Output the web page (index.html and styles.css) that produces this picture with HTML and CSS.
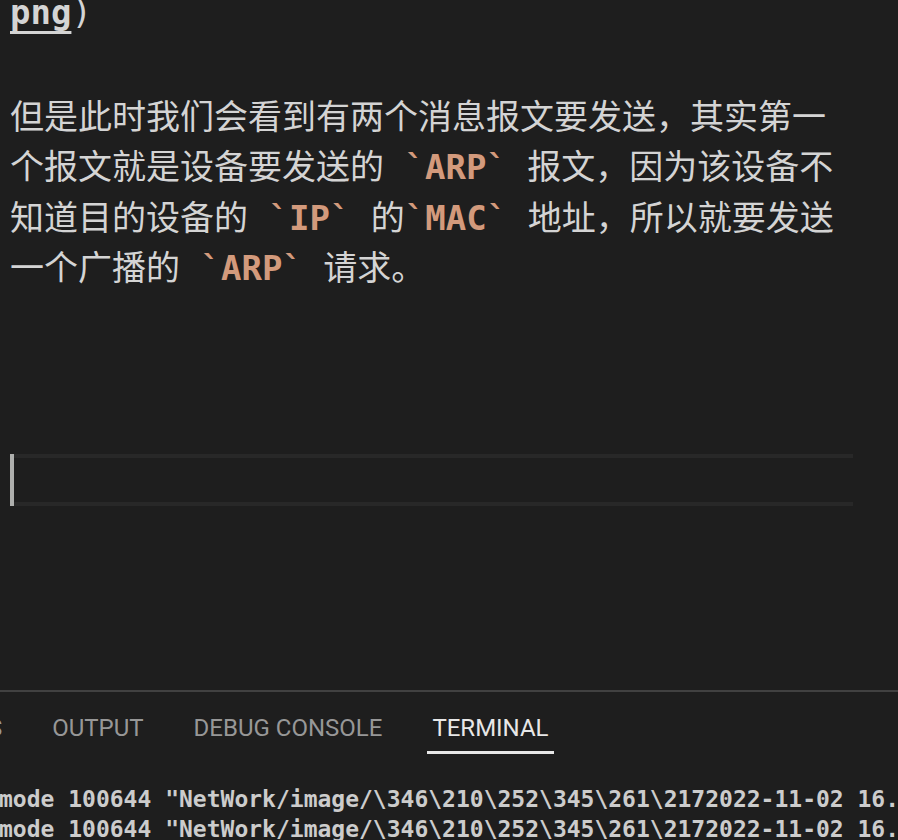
FILE: index.html
```html
<!DOCTYPE html>
<html lang="zh-CN">
<head>
<meta charset="utf-8">
<title>Editor</title>
<link rel="stylesheet" href="styles.css">
</head>
<body>
<div class="window">
  <div class="editor">
    <div class="line first"><span class="link">png</span>)</div>
    <div class="para">
      <div class="line">但是此时我们会看到有两个消息报文要发送，其实第一</div>
      <div class="line">个报文就是设备要发送的 <span class="code">`ARP`</span> 报文，因为该设备不</div>
      <div class="line">知道目的设备的 <span class="code">`IP`</span> 的<span class="code">`MAC`</span> 地址，所以就要发送</div>
      <div class="line">一个广播的 <span class="code">`ARP`</span> 请求。</div>
    </div>
    <div class="current-row">
      <div class="cursor"></div>
      <div class="current-line"></div>
    </div>
  </div>
  <div class="panel">
    <div class="tabs">
      <div class="tab"><span class="tab-label">PROBLEMS</span></div>
      <div class="tab"><span class="tab-label">OUTPUT</span></div>
      <div class="tab"><span class="tab-label">DEBUG CONSOLE</span></div>
      <div class="tab active"><span class="tab-label">TERMINAL</span></div>
    </div>
    <div class="terminal">
      <div class="term-line">mode 100644 "NetWork/image/\346\210\252\345\261\2172022-11-02 16.19.42.png"</div>
      <div class="term-line">mode 100644 "NetWork/image/\346\210\252\345\261\2172022-11-02 16.23.05.png"</div>
    </div>
  </div>
</div>
</body>
</html>
```
FILE: styles.css
```css
html, body {
  margin: 0;
  padding: 0;
  background: #1e1e1e;
  overflow: hidden;
}

.window {
  width: 898px;
  height: 840px;
  overflow: hidden;
  background: #1e1e1e;
}

.editor {
  height: 690px;
  box-sizing: border-box;
  padding-left: 10px;
  overflow: hidden;
  font-family: "DejaVu Sans Mono", "Noto Sans CJK SC", monospace;
  font-size: 34px;
  line-height: 50.4px;
  color: #d4d4d4;
}

.line {
  white-space: pre;
  height: 50.4px;
}

.line.first {
  margin-top: -13px;
}

.link {
  font-weight: bold;
  text-decoration: underline;
  text-decoration-thickness: 3px;
  text-underline-offset: 7px;
}

.para {
  margin-top: 54.6px;
}

.code {
  color: #d39a7c;
  font-weight: bold;
}

.current-row {
  margin-top: 160.4px;
  margin-right: 45px;
  height: 52px;
  display: flex;
}

.cursor {
  width: 4px;
  background: #aeafad;
}

.current-line {
  flex: 1;
  border-top: 4px solid #282828;
  border-bottom: 4px solid #282828;
}

.panel {
  height: 150px;
  box-sizing: border-box;
  border-top: 2px solid #414141;
  overflow: hidden;
}

.tabs {
  display: flex;
  margin-left: -146px;
  padding-top: 22px;
  font-family: Roboto, "Liberation Sans", sans-serif;
  font-size: 24px;
  line-height: 28px;
  color: #979797;
  white-space: nowrap;
}

.tab {
  padding: 0 25px;
}

.tab-label {
  display: block;
  padding: 0 5px 9px;
  margin: 0 -5px;
  border-bottom: 3px solid transparent;
}

.tab.active .tab-label {
  color: #e7e7e7;
  border-bottom-color: #e7e7e7;
}

.terminal {
  padding-top: 30px;
  margin-left: -1px;
  font-family: "DejaVu Sans Mono", monospace;
  font-size: 23px;
  line-height: 30px;
  font-weight: bold;
  color: #cccccc;
}

.term-line {
  white-space: pre;
}
```
